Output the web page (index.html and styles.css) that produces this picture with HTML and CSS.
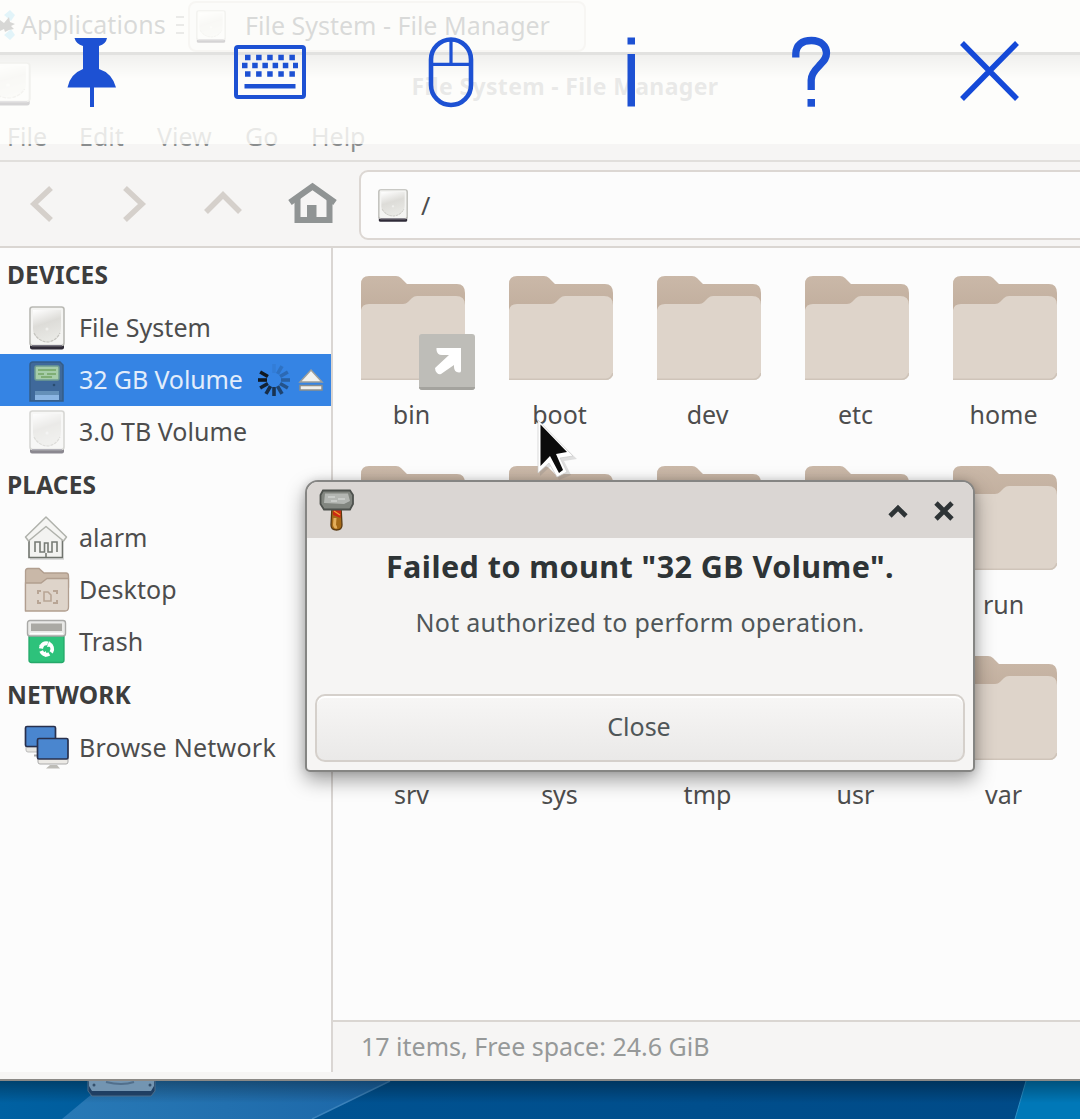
FILE: index.html
```html
<!DOCTYPE html>
<html lang="en">
<head>
<meta charset="utf-8">
<title>File System - File Manager</title>
<link rel="stylesheet" href="styles.css">
</head>
<body>
<svg class="defs" aria-hidden="true">
  <defs>
    <linearGradient id="flap" x1="0" y1="0" x2="0" y2="1"><stop offset="0" stop-color="#cab8a8"/><stop offset="1" stop-color="#c0ad9c"/></linearGradient>
    <linearGradient id="metal" x1="0" y1="0" x2="0.3" y2="1"><stop offset="0" stop-color="#fff"/><stop offset=".5" stop-color="#dddcd8"/><stop offset="1" stop-color="#e8e8e4"/></linearGradient>
    <linearGradient id="sky" x1="0" y1="0" x2="1" y2="0"><stop offset="0" stop-color="#0061a2"/><stop offset=".3" stop-color="#005291"/><stop offset="1" stop-color="#004a87"/></linearGradient>
    <linearGradient id="beam" x1="0" y1="0" x2="1" y2="0"><stop offset="0" stop-color="#2879b6"/><stop offset="1" stop-color="#1c67a8"/></linearGradient>
    <linearGradient id="shade" x1="0" y1="0" x2="0" y2="1"><stop offset="0" stop-color="#000" stop-opacity=".32"/><stop offset="1" stop-color="#000" stop-opacity="0"/></linearGradient>
    <symbol id="folder" viewBox="0 0 104 105">
      <path d="M0 40V8Q0 0 8 0H35Q38 0 40 2L46 8H96Q104 8 104 17V40Z" fill="url(#flap)"/>
      <path d="M0 104V34Q1 28 8 28H42Q45 28 47 26L51 22Q53 20 56 20H95Q104 20 104 29V96Q104 104 96 104Z" fill="#ded4ca"/>
      <path d="M0 103.2H97Q102 103 104 97" fill="none" stroke="#cfc4b9" stroke-width="1.6"/>
    </symbol>
    <symbol id="drive" viewBox="0 0 36 44" preserveAspectRatio="none">
      <rect x="1" y="36" width="34" height="7.5" rx="2" fill="#2f2b38"/>
      <rect x="1" y="1" width="34" height="38.5" rx="2.5" fill="#f4f4f2" stroke="#b9b9b4" stroke-width="1.6"/>
      <path d="M4 4H32V22C32 31 25 36 18 36S4 31 4 23Z" fill="url(#metal)"/>
      <path d="M5 27Q10 36 19 36Q27 35 31 27" fill="none" stroke="#c5c4bf" stroke-width="1.2" stroke-dasharray="3 1"/>
      <circle cx="18" cy="23" r="1.5" fill="#efefec"/>
      <path d="M3 39.5H33" stroke="#777482" stroke-width="1"/>
    </symbol>
  </defs>
</svg>

<div class="screen">
  <header class="panel">
    <svg class="apps-logo" viewBox="0 0 16 32"><path d="M4 6L10 1L15 6L11 12ZM4 26L10 31L15 26L11 20Z" fill="#6fc8ec"/><path d="M0 11L4 14L9 8L10 13L15 15L11 17L14 20L9 21L5 23L4 20L0 22Z" fill="#3b3b3b"/></svg>
    <span class="apps">Applications</span>
    <svg class="handle" viewBox="0 0 10 20"><path d="M1 2H9M1 10H9M1 18H9" stroke="#777" stroke-width="1.5"/></svg>
    <div class="task"><svg class="task-icon"><use href="#drive"/></svg><span>File System - File Manager</span></div>
  </header>

  <main class="window">
    <div class="titlebar"><svg class="title-icon"><use href="#drive"/></svg><span class="title">File System - File Manager</span></div>
    <nav class="menubar"><span>File</span><span>Edit</span><span>View</span><span>Go</span><span>Help</span></nav>
    <div class="toolbar">
      <svg class="tool" viewBox="0 0 50 50"><path d="M35 9L18 25L35 41" fill="none" stroke="#d5d0cb" stroke-width="5.500"/></svg>
      <svg class="tool" viewBox="0 0 50 50"><path d="M18 9L35 25L18 41" fill="none" stroke="#d5d0cb" stroke-width="5.500"/></svg>
      <svg class="tool" viewBox="0 0 50 50"><path d="M7 33L24 16L41 33" fill="none" stroke="#d5d0cb" stroke-width="5.500"/></svg>
      <svg class="tool" viewBox="0 0 50 50"><path d="M3 23.500L25.500 7.500L48 23.500" fill="none" stroke="#909494" stroke-width="6"/><path d="M10.500 19V41H42.500V19" fill="none" stroke="#909494" stroke-width="6"/><path d="M20 26H29.500V41H20Z" fill="#909494"/></svg>
      <div class="path"><svg class="path-icon"><use href="#drive"/></svg><span>/</span></div>
    </div>

    <div class="body">
      <aside class="sidebar">
        <h2>DEVICES</h2>
        <div class="row"><svg class="icon" viewBox="0 0 46 46"><use href="#drive" x="5" y="1" width="36" height="44"/></svg><span>File System</span></div>
        <div class="row selected">
          <svg class="icon" viewBox="0 0 46 46"><path d="M6 8Q6 5 9 5H36L39 8V44H6Z" fill="#3f699b" stroke="#345c87" stroke-width="1.500"/><rect x="11" y="9" width="24" height="14" rx="1.500" fill="#a6cda9" stroke="#6f9c92" stroke-width="1.500"/><path d="M14 13H32M14 17H20M23 17H32M17 20H28" stroke="#7fae75" stroke-width="1.800"/><path d="M11 34H35V43H11Z" fill="#8bb5e3"/><path d="M11 34H35V38H11Z" fill="#6590b9"/><circle cx="30" cy="28" r="1.300" fill="#294c70"/></svg>
          <span>32 GB Volume</span>
          <svg class="spinner" viewBox="-17 -17 34 34"><g stroke="#101820" stroke-width="3.600"><path d="M0-7V-16" opacity=".06"/><path d="M0-7V-16" transform="rotate(30)" opacity=".16"/><path d="M0-7V-16" transform="rotate(60)" opacity=".24"/><path d="M0-7V-16" transform="rotate(90)" opacity=".32"/><path d="M0-7V-16" transform="rotate(120)" opacity=".45"/><path d="M0-7V-16" transform="rotate(150)" opacity=".6"/><path d="M0-7V-16" transform="rotate(180)" opacity=".75"/><path d="M0-7V-16" transform="rotate(210)" opacity=".8"/><path d="M0-7V-16" transform="rotate(240)" opacity=".9"/><path d="M0-7V-16" transform="rotate(270)"/><path d="M0-7V-16" transform="rotate(300)"/></g></svg>
          <svg class="eject" viewBox="0 0 26 24"><path d="M13 2L24 14H2Z" fill="#f2f2ef" stroke="#9c9e9b" stroke-width="1.500"/><rect x="2" y="17.500" width="22" height="4.500" fill="#efefec" stroke="#8c8e8b" stroke-width="1.500"/></svg>
        </div>
        <div class="row"><svg class="icon dim" viewBox="0 0 46 46"><use href="#drive" x="5" y="1" width="36" height="44"/></svg><span>3.0 TB Volume</span></div>
        <h2>PLACES</h2>
        <div class="row"><svg class="icon" viewBox="0 0 46 46"><path d="M6 44H40" stroke="#ddd" stroke-width="2"/><path d="M5 22V42.500H38.500V22L22 9Z" fill="#f3f3f1" stroke="#70746e" stroke-width="1.600"/><path d="M11 37V27H16V37H20.500V28H24V37H28V27H33V37M22 42V38" fill="none" stroke="#777b75" stroke-width="1.600"/><path d="M1.500 22L22 2L42.500 22L39.500 26L22 11.500L4.500 26Z" fill="#f5f5f3" stroke="#b0b2ac" stroke-width="1.500" stroke-linejoin="round"/></svg><span>alarm</span></div>
        <div class="row"><svg class="icon" viewBox="0 0 46 46"><path d="M1.500 44V4Q1.500 1.500 4 1.500H15L20 6H42Q44.500 6 44.500 9V20H1.500Z" fill="#c9b8a8" stroke="#b19e8f" stroke-width="1.300"/><path d="M1.500 44V16H17L23 11.500H44.500V40Q44.500 44 41 44Z" fill="#ded4ca" stroke="#b19e8f" stroke-width="1.300"/><path d="M20 25H24L27 28V34H20Z" fill="none" stroke="#b8a595" stroke-width="1.600"/><path d="M14 27V24H17M14 33V36H17M29 24H33V27M29 36H33V33" fill="none" stroke="#b8a595" stroke-width="2"/></svg><span>Desktop</span></div>
        <div class="row"><svg class="icon" viewBox="0 0 46 46"><path d="M5 17H40V41Q40 43.500 37.500 43.500H7.500Q5 43.500 5 41Z" fill="#2dc27b" stroke="#25a96a" stroke-width="1.300"/><rect x="3.500" y="1.500" width="38" height="15.500" rx="2.500" fill="#e9e9e7" stroke="#a9a9a7" stroke-width="1.400"/><path d="M7 4.500H38V12H7Z" fill="#aaa9a4"/><path d="M6 14.500H39" stroke="#fff" stroke-width="1.500"/><circle cx="22.500" cy="30" r="5.700" fill="none" stroke="#fff" stroke-width="3.800" stroke-dasharray="9.500 2.440" transform="rotate(-62 22.500 30)"/><path d="M25 22L29 27L23 28ZM15 26L20 25L19 30ZM22 32V38L18 35Z" fill="#fff"/></svg><span>Trash</span></div>
        <h2>NETWORK</h2>
        <div class="row"><svg class="icon" viewBox="0 0 46 46"><path d="M2 22H18V27H4Q2 27 2 25Z" fill="#e7e6e2" stroke="#bbb" stroke-width="1"/><path d="M10 30.500H17" stroke="#aaa" stroke-width="2"/><rect x="1.500" y="1.500" width="30" height="20" rx="1.500" fill="#4a86cf" stroke="#28304d" stroke-width="1.700"/><path d="M14 33H44V37Q44 39 42 39H16Q14 39 14 37Z" fill="#eceae6" stroke="#aaa" stroke-width="1"/><rect x="13.500" y="13.500" width="30.500" height="20.500" rx="1.500" fill="#4a86cf" stroke="#28304d" stroke-width="1.700"/><path d="M26 40H33L36 43.500H22Z" fill="#bdbcb7"/></svg><span class="network">Browse Network</span></div>
      </aside>

      <div class="content">
        <div class="grid">
          <div class="cell"><svg class="folder"><use href="#folder"/></svg><svg class="emblem" viewBox="0 0 56 56"><rect width="56" height="56" rx="3" fill="#bebdb8"/><path d="M0 53H56V54Q55 56 53 56H3Q1 56 0 54Z" fill="#a4a39e"/><path d="M17.500 14H42V37Q42 38.500 40 38.500Q35 38 35 33V31L22 40Q20 41 18 39Q16 37 16 34L30 21H23Q18 21 17.500 16Z" fill="#fff"/></svg><span>bin</span></div>
          <div class="cell"><svg class="folder"><use href="#folder"/></svg><span>boot</span></div>
          <div class="cell"><svg class="folder"><use href="#folder"/></svg><span>dev</span></div>
          <div class="cell"><svg class="folder"><use href="#folder"/></svg><span>etc</span></div>
          <div class="cell"><svg class="folder"><use href="#folder"/></svg><span>home</span></div>
          <div class="cell"><svg class="folder"><use href="#folder"/></svg></div>
          <div class="cell"><svg class="folder"><use href="#folder"/></svg></div>
          <div class="cell"><svg class="folder"><use href="#folder"/></svg></div>
          <div class="cell"><svg class="folder"><use href="#folder"/></svg></div>
          <div class="cell"><svg class="folder"><use href="#folder"/></svg><span>run</span></div>
          <div class="cell"><svg class="folder"><use href="#folder"/></svg><span>srv</span></div>
          <div class="cell"><svg class="folder"><use href="#folder"/></svg><span>sys</span></div>
          <div class="cell"><svg class="folder"><use href="#folder"/></svg><span>tmp</span></div>
          <div class="cell"><svg class="folder"><use href="#folder"/></svg><span>usr</span></div>
          <div class="cell"><svg class="folder"><use href="#folder"/></svg><span>var</span></div>
        </div>
        <footer class="status"><span>17 items, Free space: 24.6 GiB</span></footer>
      </div>
    </div>
  </main>

  <svg class="desktop" viewBox="0 0 1080 38">
    <rect width="1080" height="38" fill="url(#sky)"/>
    <path d="M62 38L98 8L112 0H390L312 38Z" fill="url(#beam)"/>
    <path d="M312 38L390 0" stroke="#3b82bb" stroke-width="1.500"/>
    <path d="M1015 38L1026 0H1080V38Z" fill="#0078b8"/>
    <path d="M1015 38L1026 0" stroke="#2c8fc4"/>
    <rect width="1080" height="22" fill="url(#shade)"/>
    <path d="M88 0H155V10L151 15H92L88 10Z" fill="#1f3f63" stroke="#4d6d8a"/>
    <path d="M89 0H154V5L151 10H92L89 5Z" fill="#7395b2"/>
    <path d="M106 1Q122 5 134 1" fill="none" stroke="#516f8c" stroke-width="2"/>
    <circle cx="94" cy="4" r="1.500" fill="#34506c"/><circle cx="150" cy="4" r="1.500" fill="#34506c"/>
  </svg>

  <section class="dialog">
    <div class="dialog-title">
      <svg class="hammer" viewBox="0 0 36 44"><path d="M13 17L12 36Q12 41 17.500 41T23 36L22 17Z" fill="#a56a18" stroke="#5a3a12" stroke-width="1.300"/><path d="M16 29L15.500 36Q16 38.500 18 38" fill="none" stroke="#e3ae5b" stroke-width="3"/><path d="M14 21H22L21.500 29L14 26Z" fill="#c92a14"/><path d="M15 22L21 26" stroke="#f0a030" stroke-width="1.300"/><path d="M4 1.500H31L34 6V15L31 20.500H5L1.500 15V6Z" fill="#81857f" stroke="#4d514d" stroke-width="1.800"/><path d="M6 4.500H29L31 12L25 15L5 14Z" fill="#b3b6b2"/><path d="M9 8H16M19 10H26M12 12H18" stroke="#d0d2cf" stroke-width="1.500"/></svg>
      <span class="grow"></span>
      <svg class="wm" viewBox="0 0 22 22"><path d="M3 16L11 8L19 16" fill="none" stroke="#2e3436" stroke-width="4.600"/></svg>
      <svg class="wm" viewBox="0 0 22 22"><path d="M3 3L19 19M19 3L3 19" stroke="#2e3436" stroke-width="4.800"/></svg>
    </div>
    <h1>Failed to mount "32 GB Volume".</h1>
    <p>Not authorized to perform operation.</p>
    <button class="close">Close</button>
  </section>

  <svg class="cursor" viewBox="0 0 44 62"><path d="M4 4V56L15 46L23 60L35 55L28 41L41 39Z" fill="#777" opacity=".22"/><path d="M2 0V53L13 43L21 57L31 52L24 38L37 36Z" fill="#fff" stroke="#ccc" stroke-width=".7"/><path d="M4.500 4.500V46L14 36L23 53L27 50L20 34L31 32Z" fill="#0b0b0b"/></svg>

  <nav class="remote">
    <svg viewBox="50 32 80 80"><path d="M74.500 38H107Q106 44 99 46V69Q112 73 116 87.500H67.500Q70 74 83 69V46Q76 44 74.500 38Z"/><path d="M90 87H94V107H90Z"/></svg>
    <svg viewBox="230 32 80 80"><rect x="236" y="47" width="68" height="50" rx="2" fill="none" stroke="#1d51d3" stroke-width="4"/><path d="M245 57.500H298" stroke="#1d51d3" stroke-width="5.500" stroke-dasharray="5.500 5.600"/><path d="M242 65.500H298" stroke="#1d51d3" stroke-width="5.500" stroke-dasharray="5.500 4.700"/><path d="M245 74H298" stroke="#1d51d3" stroke-width="5.500" stroke-dasharray="5.500 5.600"/><path d="M244.500 86.300H295.500" stroke="#1d51d3" stroke-width="4.600"/></svg>
    <svg viewBox="410 32 80 80"><rect x="431" y="39.500" width="40" height="65.500" rx="20" fill="none" stroke="#1d51d3" stroke-width="4.600"/><path d="M431 64.300H471M451 40V64" stroke="#1d51d3" stroke-width="3.200"/></svg>
    <svg viewBox="590 32 80 80"><path d="M627.500 37.500H635V44.500H627.500ZM627.500 54H635V106.500H627.500Z"/></svg>
    <svg viewBox="770 32 80 80"><path d="M795.800 57.500V54C796 45 802 40.500 811.500 40.500C821 40.500 826.500 46 826.500 53C826.500 59 823 61.500 819 66C814 71 811.200 75 811.200 80V90" fill="none" stroke="#1d51d3" stroke-width="7.300"/><path d="M807.500 99H815V106.700H807.500Z"/></svg>
    <svg viewBox="950 32 80 80"><path d="M962 43L1017 99M1017 43L962 99" stroke="#1449d8" stroke-width="5.500"/></svg>
  </nav>
</div>
</body>
</html>
```
FILE: styles.css
```css
* { box-sizing: border-box; }
body { margin: 0; font-family: "Noto Sans", "Open Sans", sans-serif; font-size: 25px; color: #4d4d4d; overflow: hidden; }
.defs { position: absolute; width: 0; height: 0; }
svg { display: block; flex: none; }
.screen { position: relative; width: 1080px; height: 1119px; overflow: hidden; display: flex; flex-direction: column; }

.panel { height: 55px; flex: none; display: flex; align-items: center; background: #f6f5f4; border-bottom: 3px solid #70706e; color: #44494c; line-height: 46px; white-space: nowrap; }
.apps-logo { width: 16px; height: 32px; margin-top: -2px; }
.apps { margin: -4px 0 0 5px; width: 154px; letter-spacing: .1px; }
.handle { width: 10px; height: 20px; margin: -2px 3px 0 0; }
.task { width: 398px; height: 51px; display: flex; align-items: center; padding-left: 6px; gap: 19px; border: 2px solid #d5d0cc; border-radius: 8px; background: #efeeed; }
.task span { margin-top: -3px; }
.task-icon { width: 30px; height: 33px; }

.window { height: 1026px; flex: none; display: flex; flex-direction: column; background: #f6f5f4; border-bottom: 2px solid #8b8986; }
.titlebar { height: 61px; flex: none; display: flex; align-items: center; background: linear-gradient(#b5b5b5, #f6f5f4 24px); }
.title-icon { width: 46px; height: 44px; margin: -3px 0 0 -15px; }
.title { flex: 1; padding-left: 19px; text-align: center; font-weight: 700; font-size: 23px; letter-spacing: .35px; color: #909394; }
.menubar { height: 46px; flex: none; display: flex; border-bottom: 2px solid #e1dfdc; line-height: 41px; color: #8a8d8e; padding-left: 7px; }
.menubar span:nth-child(1) { width: 72px; }
.menubar span:nth-child(2) { width: 78px; }
.menubar span:nth-child(3) { width: 88px; }
.menubar span:nth-child(4) { width: 66px; }
.toolbar { height: 86px; flex: none; display: flex; align-items: center; border-bottom: 2px solid #dad6d2; padding-left: 16px; }
.tool { width: 50px; height: 50px; margin-right: 41px; }
.tool:nth-child(2) { margin-right: 42px; }
.tool:nth-child(3) { margin-right: 38px; }
.tool:nth-child(4) { margin-right: 22px; }
.path { width: 740px; height: 70px; flex: none; display: flex; align-items: center; gap: 13px; padding-left: 17px; margin-top: 2px; border: 2px solid #dcd7d3; border-radius: 9px; background: #fcfcfc; }
.path-icon { width: 30px; height: 33px; }

.body { flex: 1; display: flex; min-height: 0; }
.sidebar { width: 333px; height: 824px; flex: none; background: #fcfcfc; border-right: 2px solid #dad6d3; }
.sidebar h2 { margin: 0; height: 54px; line-height: 54px; padding-left: 7px; font-size: 24.5px; color: #3d3d3d; letter-spacing: .15px; }
.row { height: 52px; display: flex; align-items: center; padding-left: 24px; white-space: nowrap; }
.row span { line-height: 46px; margin-top: -3px; letter-spacing: .05px; }
.row .network { letter-spacing: .25px; }
.row .icon { width: 46px; height: 46px; margin-right: 9px; }
.row.selected { background: #3584e4; color: #e2edfb; }
.row.selected span { letter-spacing: -.1px; }
.dim { opacity: .55; }
.spinner { width: 34px; height: 34px; margin-left: auto; }
.eject { width: 26px; height: 24px; margin: 0 7px 0 7px; }

.content { flex: 1; display: flex; flex-direction: column; min-width: 0; background: #fcfcfc; }
.grid { flex: 1; display: grid; grid-template-columns: repeat(5, 148px); grid-auto-rows: 190px; padding: 28px 0 0 6px; align-content: start; }
.cell { position: relative; display: flex; flex-direction: column; align-items: center; }
.cell span { margin: 15px 3px 0 0; line-height: 36px; }
.folder { width: 104px; height: 105px; }
.emblem { position: absolute; left: 80px; top: 58px; width: 56px; height: 56px; }
.status { height: 59px; flex: none; border-top: 2px solid #dad6d2; background: #f6f5f4; color: #969999; padding-left: 28px; line-height: 49px; }

.desktop { width: 1080px; height: 38px; }

.dialog { position: absolute; left: 305px; top: 480px; width: 670px; height: 292px; display: flex; flex-direction: column; align-items: center; border: 2px solid #858583; border-radius: 13px 13px 5px 5px; background: #f6f5f4; box-shadow: 0 8px 20px rgba(0,0,0,.38), 0 0 8px rgba(0,0,0,.12); color: #4f5658; overflow: hidden; }
.dialog-title { align-self: stretch; height: 56px; flex: none; display: flex; align-items: center; padding: 0 18px 0 12px; gap: 24px; background: #dad6d3; }
.hammer { width: 36px; height: 44px; margin-top: 1px; }
.grow { flex: 1; }
.wm { width: 22px; height: 22px; margin-top: 2px; }
.dialog h1 { margin: 7px 0 0; font-size: 30.5px; line-height: 42px; letter-spacing: .45px; color: #2e3436; white-space: nowrap; }
.dialog p { margin: 17px 0 0; line-height: 36px; letter-spacing: .28px; white-space: nowrap; }
.close { width: 650px; height: 68px; margin: 54px 0 0; flex: none; border: 2px solid #d5d0cb; border-radius: 10px; background: linear-gradient(#f7f6f5, #eae9e8); box-shadow: inset 0 2px #fff; font: inherit; color: #4f5658; padding: 0 2px 4px 0; }
.cursor { position: absolute; left: 536px; top: 420px; width: 44px; height: 62px; }

.remote { position: absolute; left: 0; top: 0; width: 1080px; height: 144px; display: flex; justify-content: space-around; padding-top: 32px; background: rgba(255,255,253,.8); }
.remote svg { width: 80px; height: 80px; fill: #1d51d3; }
```
